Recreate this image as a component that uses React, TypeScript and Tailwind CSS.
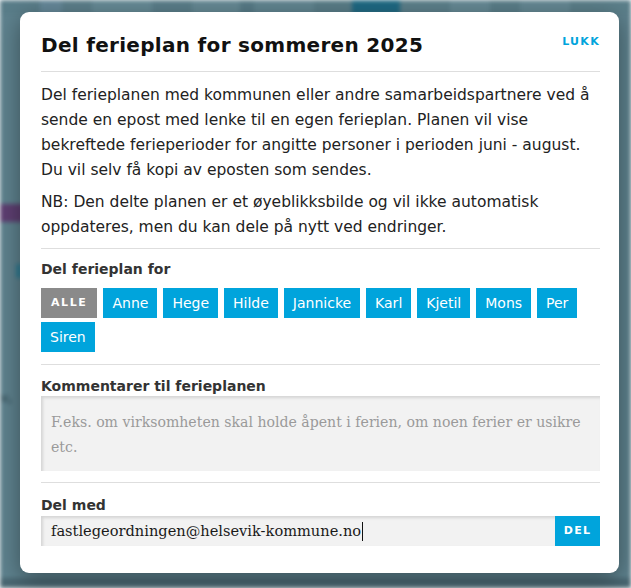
const NAMES = ["Anne", "Hege", "Hilde", "Jannicke", "Karl", "Kjetil", "Mons", "Per", "Siren"];

// faint column stripes of the page behind the dialog
const STRIPES = [
  ["w-[40px]", "bg-[#5a7e8a]"],
  ["w-[22px]", "bg-[#66899a]"],
  ["w-[30px]", "bg-[#5d808c]"],
  ["w-[60px]", "bg-[#668b96]"],
  ["w-[40px]", "bg-[#5b7f8b]"],
  ["w-[48px]", "bg-[#668a95]"],
  ["w-[14px]", "bg-[#587c88]"],
  ["w-[60px]", "bg-[#628691]"],
  ["w-[38px]", "bg-[#5a7e89]"],
  ["w-[48px]", "bg-[#1f6a84]"],
  ["w-[50px]", "bg-[#5d818c]"],
  ["w-[40px]", "bg-[#668a95]"],
  ["w-[30px]", "bg-[#5b7f8a]"],
  ["w-[50px]", "bg-[#658994]"],
  ["flex-1", "bg-[#5c808b]"],
];

function Backdrop() {
  return (
    <div className="flex h-[588px] w-[631px] flex-col bg-[#5e828e] blur-[2px]">
      <div className="flex h-[14px]">
        {STRIPES.map(([w, bg], i) => (
          <div key={i} className={`${w} ${bg}`} />
        ))}
      </div>
      <div className="mt-[190px] h-[18px] w-[24px] bg-[#5e3f72]" />
      <div className="ml-[16px] mt-[42px] h-[14px] w-[6px] bg-[#2f7c93]" />
      <div className="mt-[110px] w-[20px] text-[13px] font-bold text-[#3d5863]">v,</div>
      <div className="mt-auto h-[10px] bg-[#4a6873]" />
    </div>
  );
}

export default function App() {
  return (
    <div className="relative h-[588px] w-[631px] overflow-hidden font-['DejaVu_Sans',sans-serif]">
      <Backdrop />

      {/* dialog */}
      <div className="absolute left-[20px] top-[12px] w-[599px] rounded-[9px] bg-white pb-[27px] pl-[21px] pr-[19px] shadow-[0_6px_24px_rgba(0,0,0,0.4)]">
        <div className="flex items-start justify-between border-b border-[#dedede] pb-[11px] pt-[18px]">
          <h1 className="text-[20px] font-bold leading-[30px] tracking-[0.3px] text-[#111]">
            Del ferieplan for sommeren 2025
          </h1>
          <button className="mt-[4px] text-[11px] font-bold uppercase leading-[16px] tracking-[1.3px] text-[#00a4dc]">
            Lukk
          </button>
        </div>

        <div className="border-b border-[#dedede] pb-[8px] pt-[11px] text-[15.5px] leading-[25px] text-[#222]">
          <p>
            Del ferieplanen med kommunen eller andre samarbeidspartnere ved å sende en epost med lenke til en
            egen ferieplan. Planen vil vise bekreftede ferieperioder for angitte personer i perioden juni - august.
            Du vil selv få kopi av eposten som sendes.
          </p>
          <p className="mt-[7px]">
            NB: Den delte planen er et øyeblikksbilde og vil ikke automatisk oppdateres, men du kan dele på nytt
            ved endringer.
          </p>
        </div>

        <div className="border-b border-[#dedede] pb-[12px] pt-[10px]">
          <h2 className="text-[14px] font-bold leading-[20px] text-[#333]">Del ferieplan for</h2>
          <div className="mt-[9px] flex flex-wrap gap-x-[6px] gap-y-[4px]">
            <button className="h-[30px] bg-[#8a8a8a] px-[10px] text-[11px] font-bold uppercase tracking-[1.6px] text-white">
              Alle
            </button>
            {NAMES.map((n) => (
              <button key={n} className="h-[30px] bg-[#00a4dc] px-[9px] text-[14px] text-white">
                {n}
              </button>
            ))}
          </div>
        </div>

        <div className="border-b border-[#dedede] pb-[11px] pt-[11px]">
          <h2 className="text-[14px] font-bold leading-[20px] text-[#333]">Kommentarer til ferieplanen</h2>
          <textarea
            rows={2}
            placeholder="F.eks. om virksomheten skal holde åpent i ferien, om noen ferier er usikre etc."
            className="block h-[75px] w-full resize-none bg-[#f2f2f2] px-[10px] pt-[14px] font-['DejaVu_Serif',serif] text-[14.1px] leading-[25px] text-[#222] shadow-[inset_2px_2px_3px_rgba(0,0,0,0.12)] outline-none placeholder:text-[#9a9a9a]"
          />
        </div>

        <div className="pt-[12px]">
          <h2 className="text-[14px] font-bold leading-[20px] text-[#333]">Del med</h2>
          <div className="mt-[1px] flex h-[30px]">
            <div className="flex flex-1 items-center bg-[#f2f2f2] px-[10px] font-['DejaVu_Serif',serif] text-[14.6px] text-[#1a1a1a] shadow-[inset_2px_2px_3px_rgba(0,0,0,0.12)]">
              fastlegeordningen@helsevik-kommune.no
              <span className="ml-[1px] h-[19px] w-px bg-[#111]" />
            </div>
            <button className="w-[45px] bg-[#00a4dc] text-[11px] font-bold uppercase tracking-[1.3px] text-white">
              Del
            </button>
          </div>
        </div>
      </div>
    </div>
  );
}
